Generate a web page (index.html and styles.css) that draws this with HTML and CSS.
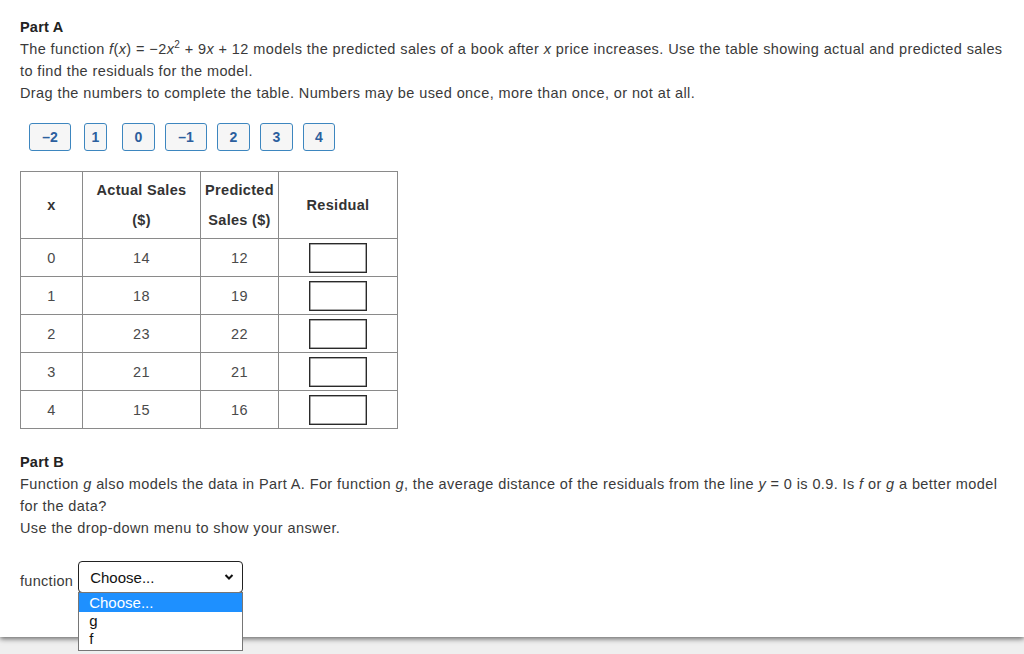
FILE: index.html
```html
<!DOCTYPE html>
<html>
<head>
<meta charset="utf-8">
<link rel="stylesheet" href="styles.css">
</head>
<body>
<div class="page">
  <p class="title">Part A</p>
  <p class="line">The function <i>f</i>(<i>x</i>) = −2<i>x</i><sup>2</sup> + 9<i>x</i> + 12 models the predicted sales of a book after <i>x</i> price increases. Use the table showing actual and predicted sales<br>to find the residuals for the model.</p>
  <p class="line">Drag the numbers to complete the table. Numbers may be used once, more than once, or not at all.</p>

  <div class="tiles">
    <span class="tile t1">–2</span>
    <span class="tile t2">1</span>
    <span class="tile t3">0</span>
    <span class="tile t4">–1</span>
    <span class="tile t5">2</span>
    <span class="tile t6">3</span>
    <span class="tile t7">4</span>
  </div>

  <table class="data">
    <colgroup>
      <col class="c1"><col class="c2"><col class="c3"><col class="c4">
    </colgroup>
    <thead>
      <tr>
        <th>x</th>
        <th>Actual Sales<br>($)</th>
        <th>Predicted<br>Sales ($)</th>
        <th>Residual</th>
      </tr>
    </thead>
    <tbody>
      <tr><td>0</td><td>14</td><td>12</td><td><span class="drop"></span></td></tr>
      <tr><td>1</td><td>18</td><td>19</td><td><span class="drop"></span></td></tr>
      <tr><td>2</td><td>23</td><td>22</td><td><span class="drop"></span></td></tr>
      <tr><td>3</td><td>21</td><td>21</td><td><span class="drop"></span></td></tr>
      <tr><td>4</td><td>15</td><td>16</td><td><span class="drop"></span></td></tr>
    </tbody>
  </table>

  <p class="title partb">Part B</p>
  <p class="line">Function <i>g</i> also models the data in Part A. For function <i>g</i>, the average distance of the residuals from the line <i>y</i> = 0 is 0.9. Is <i>f</i> or <i>g</i> a better model<br>for the data?</p>
  <p class="line">Use the drop-down menu to show your answer.</p>

  <div class="answer">
    <span class="label">function</span>
    <div class="selectwrap">
      <div class="select">
        <span>Choose...</span>
        <svg class="chev" width="10" height="8" viewBox="0 0 10 8"><path d="M1.5 2 L5 5.5 L8.5 2" fill="none" stroke="#111" stroke-width="2"/></svg>
      </div>
      <ul class="menu">
        <li class="sel">Choose...</li>
        <li>g</li>
        <li>f</li>
      </ul>
    </div>
  </div>
</div>
</body>
</html>
```

FILE: styles.css
```css
html, body {
  margin: 0;
  padding: 0;
}
body {
  background: #efefef;
  font-family: "Liberation Sans", Arial, sans-serif;
  font-size: 14.5px;
  letter-spacing: 0.4px;
  color: #333;
  width: 1024px;
  height: 654px;
  overflow: hidden;
}
.page {
  background: #fff;
  height: 637px;
  box-sizing: border-box;
  padding: 16px 4px 0 20px;
  box-shadow: 0 2px 5px rgba(0,0,0,0.55);
  position: relative;
  white-space: nowrap;
}
p {
  margin: 0;
  line-height: 22px;
}
.title {
  font-weight: bold;
  color: #222;
  letter-spacing: 0.2px;
}
.line {
  color: #3a3a3a;
}
sup {
  font-size: 10px;
  line-height: 0;
  vertical-align: 6px;
}
.tiles {
  display: flex;
  margin: 19px 0 0 9px;
}
.tile {
  box-sizing: border-box;
  height: 28px;
  width: 33px;
  border: 1px solid #3d86bf;
  border-radius: 3px;
  background: #f6f6f6;
  color: #2c5f9e;
  font-weight: bold;
  font-size: 14px;
  letter-spacing: 0;
  display: flex;
  align-items: center;
  justify-content: center;
}
.t1 { width: 42px; }
.t2 { width: 23px; margin-left: 13px; }
.t3 { width: 33px; margin-left: 15px; }
.t4 { width: 42px; margin-left: 10px; }
.t5 { width: 33px; margin-left: 10px; }
.t6 { width: 33px; margin-left: 10px; }
.t7 { width: 32px; margin-left: 10px; }
.data {
  margin-top: 20px;
  border-collapse: collapse;
  table-layout: fixed;
  width: 377px;
  border: 1px solid #333;
}
.c1 { width: 62px; }
.c2 { width: 118px; }
.c3 { width: 78px; }
.c4 { width: 119px; }
.data th, .data td {
  border: 1px solid #8a8a8a;
  text-align: center;
  padding: 0;
}
.data th {
  height: 66px;
  font-weight: bold;
  color: #333;
  line-height: 30px;
  letter-spacing: 0.3px;
}
.data td {
  height: 37px;
  color: #4a4a4a;
}
.drop {
  display: inline-block;
  vertical-align: middle;
  width: 58px;
  height: 30px;
  border: 1px solid #2a2a2a;
  box-sizing: border-box;
  box-shadow: inset 0 0 0 0.5px #555;
}
.partb {
  margin-top: 22px;
}
.answer {
  margin-top: 22px;
  display: flex;
  align-items: flex-end;
}
.label {
  color: #3a3a3a;
  margin-right: 5px;
  line-height: 20px;
  margin-bottom: 2px;
  letter-spacing: 0.3px;
}
.selectwrap {
  position: relative;
}
.select {
  box-sizing: border-box;
  width: 165px;
  height: 32px;
  border: 1px solid #222;
  border-radius: 4px;
  display: flex;
  align-items: center;
  justify-content: space-between;
  padding: 0 8px 0 11px;
  color: #111;
  font-size: 15px;
  letter-spacing: 0;
  background: #fff;
}
.chev {
  display: block;
}
.menu {
  position: absolute;
  left: 0;
  top: 31px;
  width: 165px;
  box-sizing: border-box;
  margin: 0;
  padding: 0 0 2px 0;
  list-style: none;
  border: 1px solid #767676;
  background: #fff;
  z-index: 5;
  letter-spacing: 0;
}
.menu li {
  height: 18px;
  line-height: 18px;
  padding-left: 10px;
  color: #111;
  font-size: 15px;
}
.menu li.sel {
  background: #1e90ff;
  color: #fff;
  height: 19px;
  line-height: 20px;
}
```
